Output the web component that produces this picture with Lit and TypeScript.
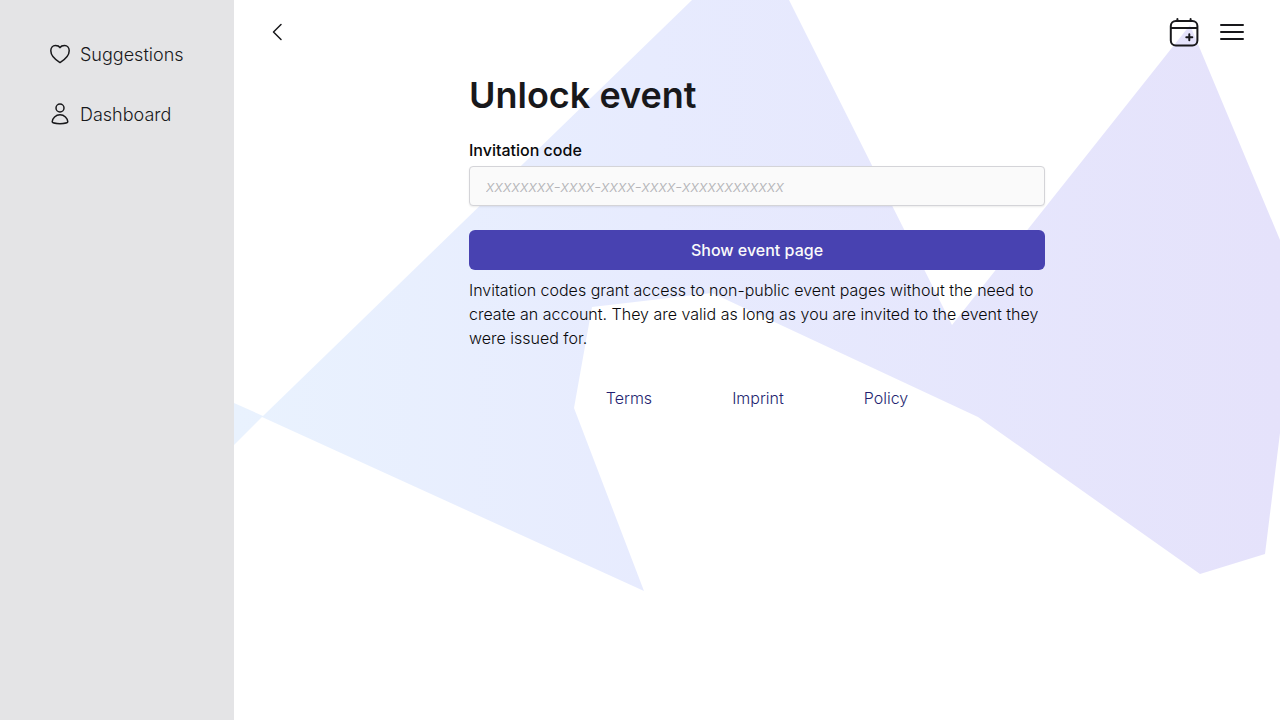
import { LitElement, html, css, svg } from "lit";
import { customElement } from "lit/decorators.js";

const backdrop = svg`
  <defs>
    <linearGradient id="tint" gradientUnits="userSpaceOnUse" x1="0" y1="0" x2="1046" y2="0">
      <stop offset="0" stop-color="#e9f2fe" />
      <stop offset="0.4" stop-color="#e7ebfe" />
      <stop offset="1" stop-color="#e5e2fb" />
    </linearGradient>
  </defs>
  <path fill="url(#tint)" d="M0 403 L29 416 L458 0 H555 L718 325 L956 25 L1046 240 V433 L1031 554 L966 574 L744 417 L478 293 L358 307 L340 408 L410 591 L28 417 L0 445 Z" />
`;

@customElement("app-root")
export class AppRoot extends LitElement {
  static styles = css`
    :host {
      display: block;
      font-family: Inter, "Open Sans", sans-serif;
      font-size: 16px;
      font-weight: 300;
      line-height: 24px;
      color: #18181b;
    }
    *, *::before, *::after { box-sizing: border-box; }
    .shell {
      display: grid;
      grid-template-columns: 234px minmax(0, 1fr);
      min-height: 100vh;
      background: #fff;
    }
    .sidebar {
      display: flex;
      flex-direction: column;
      gap: 34px;
      padding: 42px 48px;
      background: #e4e4e6;
    }
    .nav-link {
      display: flex;
      align-items: flex-start;
      gap: 8px;
      font-size: 18px;
      line-height: 26px;
      color: inherit;
      text-decoration: none;
    }
    .icon {
      display: block;
      flex: none;
      fill: none;
      stroke: currentColor;
      stroke-width: 1.5;
      stroke-linecap: round;
      stroke-linejoin: round;
    }
    .stage { display: grid; grid-template: minmax(0, 1fr) / minmax(0, 1fr); }
    .backdrop { grid-area: 1 / 1; width: 100%; height: 100%; min-height: 0; display: block; }
    .page { grid-area: 1 / 1; z-index: 1; }
    .topbar {
      display: flex;
      align-items: center;
      gap: 14px;
      height: 64px;
      padding: 0 32px;
    }
    .spacer { flex: 1; }
    .icon-button {
      display: grid;
      place-items: center;
      padding: 0;
      border: 0;
      background: none;
      color: inherit;
    }
    .content {
      max-width: 608px;
      margin: 0 auto;
      padding: 8px 16px 32px;
    }
    .title { margin: 0 0 20px; font-size: 36px; line-height: 46px; font-weight: 600; }
    .label { display: block; margin-bottom: 4px; font-weight: 500; color: #09090b; }
    .field {
      display: block;
      width: 100%;
      height: 40px;
      padding: 0 16px;
      border: 1px solid #d4d4d8;
      border-radius: 4px;
      background: #fafafa;
      box-shadow: 0 1px 2px rgb(0 0 0 / 8%);
      font: inherit;
      color: inherit;
    }
    .field::placeholder { color: #b4b4b8; font-style: italic; opacity: 1; }
    .submit {
      display: block;
      width: 100%;
      height: 40px;
      margin: 24px 0 8px;
      border: 0;
      border-radius: 6px;
      background: #4842b1;
      color: #fafafa;
      font: inherit;
      font-weight: 500;
    }
    .hint { margin: 0; color: #09090b; }
    .footer { display: flex; justify-content: center; gap: 80px; margin-top: 36px; }
    .footer-link { color: #241f70; text-decoration: none; }
  `;

  render() {
    return html`
      <div class="shell">
        <nav class="sidebar">
          <a class="nav-link" href="#suggestions">
            <svg class="icon" width="24" height="24" viewBox="0 0 24 24" aria-hidden="true">
              <path d="M12 20.6C7.2 17.7 2.8 13.8 2.8 8.8C2.8 5.6 4.8 3.5 7.3 3.5C9.6 3.5 11.1 4 12 5.6C12.9 4 14.4 3.5 16.7 3.5C19.2 3.5 21.2 5.6 21.2 8.8C21.2 13.8 16.8 17.7 12 20.6Z" />
            </svg>
            Suggestions
          </a>
          <a class="nav-link" href="#dashboard">
            <svg class="icon" width="24" height="24" viewBox="0 0 24 24" aria-hidden="true">
              <circle cx="12" cy="6" r="4" />
              <path d="M12 12.8C7.7 12.8 4.4 16.3 4.2 19.7C4.2 20.5 7.5 21.7 12 21.7C16.5 21.7 19.8 20.5 19.8 19.7C19.6 16.3 16.3 12.8 12 12.8Z" />
            </svg>
            Dashboard
          </a>
        </nav>
        <div class="stage">
          <svg class="backdrop" viewBox="0 0 1046 720" preserveAspectRatio="xMidYMin slice" aria-hidden="true">${backdrop}</svg>
          <div class="page">
            <header class="topbar">
              <button class="icon-button" aria-label="Back">
                <svg class="icon" width="24" height="24" viewBox="0 0 24 24" aria-hidden="true">
                  <path d="M15 4.5 L7.5 12 L15 19.5" />
                </svg>
              </button>
              <span class="spacer"></span>
              <button class="icon-button" aria-label="Create event">
                <svg class="icon" width="36" height="36" viewBox="0 0 36 36" aria-hidden="true">
                  <g stroke-width="2">
                    <rect x="4.8" y="7" width="26.6" height="24.4" rx="5" />
                    <path d="M5 13.9H31M11.4 5V7M24.6 5V7M23.3 20.2V26.2M20.3 23.2H26.3" />
                  </g>
                </svg>
              </button>
              <button class="icon-button" aria-label="Menu">
                <svg class="icon" width="32" height="32" viewBox="0 0 32 32" aria-hidden="true">
                  <path stroke-width="2" d="M5 9H27M5 16H27M5 23H27" />
                </svg>
              </button>
            </header>
            <main class="content">
              <h1 class="title">Unlock event</h1>
              <form>
                <label class="label" for="code">Invitation code</label>
                <input class="field" id="code" type="text" placeholder="xxxxxxxx-xxxx-xxxx-xxxx-xxxxxxxxxxxx" />
                <button class="submit" type="button">Show event page</button>
              </form>
              <p class="hint">
                Invitation codes grant access to non-public event pages without the need to create an account. They are
                valid as long as you are invited to the event they were issued for.
              </p>
              <footer class="footer">
                <a class="footer-link" href="#terms">Terms</a>
                <a class="footer-link" href="#imprint">Imprint</a>
                <a class="footer-link" href="#policy">Policy</a>
              </footer>
            </main>
          </div>
        </div>
      </div>
    `;
  }
}
